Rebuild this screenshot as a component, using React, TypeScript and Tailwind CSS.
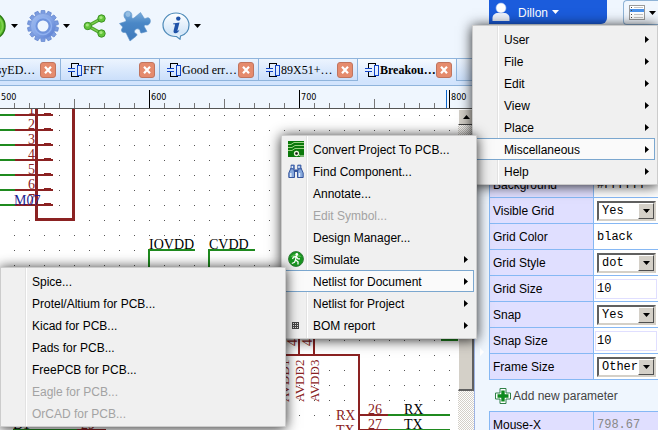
import React from "react";

const TABS = [
  { title: "EasyED…", active: false },
  { title: "FFT", active: false },
  { title: "Good err…", active: false },
  { title: "89X51+…", active: false },
  { title: "Breakou…", active: true },
];

type Item = {
  label: string;
  sub?: boolean;
  active?: boolean;
  disabled?: boolean;
  icon?: React.ReactNode;
};

function Caret({ className = "" }: { className?: string }) {
  return (
    <svg className={"h-1 w-[7px] shrink-0 " + className} viewBox="0 0 7 4" aria-hidden="true">
      <path d="M0 0H7L3.5 4Z" fill="currentColor" />
    </svg>
  );
}

function GearIcon() {
  const teeth = Array.from({ length: 14 }, (_, i) => (i * 360) / 14);
  return (
    <svg className="size-8" viewBox="-16 -16 32 32" aria-hidden="true">
      <defs>
        <linearGradient id="gear" x1="0" y1="0" x2="1" y2="1">
          <stop offset="0" stopColor="#a3bef0" />
          <stop offset="0.5" stopColor="#86a6e6" />
          <stop offset="1" stopColor="#5479cf" />
        </linearGradient>
      </defs>
      {teeth.map((a) => (
        <path key={a} d="M-2.400 -11L-1.800 -15.500H1.800L2.400 -11Z" fill="#7b9ce0" stroke="#6184cd" strokeWidth="0.700" transform={`rotate(${a})`} />
      ))}
      <circle r="12.500" fill="url(#gear)" stroke="#7294da" strokeWidth="0.600" />
      <circle r="8.500" fill="none" stroke="#8fb0ef" strokeWidth="1.500" />
      <circle r="6.500" fill="none" stroke="#6f93dc" strokeWidth="2" />
      <circle r="5.500" fill="#eff6fe" />
    </svg>
  );
}

function ShareIcon() {
  return (
    <svg className="h-6 w-6" viewBox="0 0 24 24" aria-hidden="true">
      <path d="M18.500 4.500L5 12L18.500 19.500" fill="none" stroke="#4da32f" strokeWidth="3.400" />
      <path d="M18.500 4.500L5 12L18.500 19.500" fill="none" stroke="#7ed14f" strokeWidth="1.400" />
      {[[18.5, 4.5], [4.8, 12], [18.5, 19.5]].map(([x, y]) => (
        <g key={`${x}${y}`}>
          <circle cx={x} cy={y} r="3.700" fill="#63c53a" stroke="#3f9427" />
          <circle cx={x - 0.5} cy={y - 1} r="1.600" fill="#a6e77e" />
        </g>
      ))}
    </svg>
  );
}

function PuzzleIcon() {
  return (
    <svg className="size-8" viewBox="0 0 32 32" aria-hidden="true">
      <defs>
        <linearGradient id="puzzle" x1="0" y1="0" x2="0" y2="1">
          <stop offset="0" stopColor="#7fb0dc" />
          <stop offset="0.4" stopColor="#4a87c6" />
          <stop offset="1" stopColor="#3f7abc" />
        </linearGradient>
      </defs>
      <path
        d="M0.500 13.500L6.500 11.500C7.500 10.500 7 9.500 5.800 8C4 5.500 5.200 1.500 8.500 1.200C12 1 13.300 4 12.800 6.500C12.600 8.200 13.500 8.800 15 8L21.500 2.500L25 8C26 9.300 27 8 28.500 7.700C30.500 7.500 31.800 9.500 31.300 12C30.800 14.500 28.800 15.500 26.800 15C25.300 14.700 24.800 15.800 25.500 17L28 21.500L22.500 23C21.300 23 21.300 21.800 21 20.500C20.300 18.500 17.500 18.200 16 20C14.800 21.500 15.500 23 17 23.500C18.300 24.200 18.300 25.300 17 26.300L11 31L7.800 24.500C7.200 22.800 6.300 22.300 4.800 22.500C2.500 22.500 1.800 19.800 3 18.500C4.200 17.500 3.300 16.500 2.500 15.800Z"
        fill="url(#puzzle)"
        stroke="#5e93c9"
        strokeWidth="0.600"
      />
      <circle cx="9" cy="4.500" r="2.400" fill="#a5c9e8" opacity="0.700" />
    </svg>
  );
}

function InfoIcon() {
  return (
    <svg className="size-7" viewBox="0 0 28 28" aria-hidden="true">
      <defs>
        <linearGradient id="info" x1="0" y1="0" x2="0" y2="1">
          <stop offset="0" stopColor="#ffffff" />
          <stop offset="0.750" stopColor="#d3e6f8" />
          <stop offset="1" stopColor="#f4faff" />
        </linearGradient>
      </defs>
      <path
        d="M14 1C21.500 1 27 6.500 27 13C27 18.500 23.500 22.500 18.500 24L18 27.200L14.500 24.500C6.500 24.800 1 19.800 1 13C1 6.500 6.500 1 14 1Z"
        fill="url(#info)"
        stroke="#4d8ab8"
        strokeWidth="1.200"
      />
      <circle cx="16.300" cy="6.600" r="2.200" fill="#1f52a8" />
      <path d="M11 11.500L17.500 10.500L15.500 18.200C15.300 19.300 16 19.200 17.500 17.500C17 20 15 21.300 13.300 21.200C11.500 21 11.300 19.700 11.700 18.200L13 13C13.200 12.200 12.500 12 11 12.200Z" fill="#1f52a8" />
    </svg>
  );
}

function SchematicIcon() {
  return (
    <svg className="h-[14px] w-[15px] shrink-0" viewBox="0 0 15 14" fill="none" shapeRendering="crispEdges" aria-hidden="true">
      <path d="M3.500 5V0.500H10.500V2M3.500 9V13.500H10.500V12" stroke="#000" />
      <path d="M0 5.500H7M0 8.500H7" stroke="#1043c8" />
      <rect x="9.500" y="2.500" width="4" height="10" stroke="#1043c8" />
    </svg>
  );
}

function CloseIcon() {
  return (
    <svg className="size-4 block" viewBox="0 0 16 16" aria-hidden="true">
      <rect x="0.500" y="0.500" width="15" height="15" rx="2.500" fill="#e58b6d" stroke="#c0745e" />
      <path d="M5 4.800L11 11.200M11 4.800L5 11.200" stroke="#fff" strokeWidth="2.200" />
    </svg>
  );
}

function Header() {
  return (
    <header className="flex h-[58px] shrink-0 justify-between">
      <nav className="flex h-[52px] items-center" aria-label="Toolbar">
        <button aria-label="Run" className="-ml-[22px] mr-1">
          <svg className="size-7 block" viewBox="0 0 28 28" aria-hidden="true">
            <circle cx="14" cy="14" r="13" fill="#5fc02c" stroke="#2d7d17" strokeWidth="1.500" />
            <circle cx="14" cy="14" r="10.500" fill="none" stroke="#7fd152" strokeWidth="1.500" />
          </svg>
        </button>
        <button aria-label="Run options" className="ml-px"><Caret /></button>
        <button aria-label="Settings" className="ml-[9px]"><GearIcon /></button>
        <button aria-label="Settings options" className="ml-1"><Caret /></button>
        <button aria-label="Share" className="ml-[13px]"><ShareIcon /></button>
        <button aria-label="Extensions" className="ml-3"><PuzzleIcon /></button>
        <button aria-label="About" className="ml-[11px]"><InfoIcon /></button>
        <button aria-label="About options" className="ml-1"><Caret /></button>
      </nav>
      <div className="flex items-start">
        <button className="flex h-6 w-[118px] items-center rounded-br-md bg-[#1b5cdc] pl-[3px] text-white">
          <svg className="h-[22px] w-[18px]" viewBox="0 0 18 22" aria-hidden="true">
            <path d="M0.500 20V17C0.500 14 3 12 6 12H12C15 12 17.500 14 17.500 17V20Z" fill="#eef3fc" />
            <circle cx="9" cy="7" r="5" fill="#fff" stroke="#9dbbf0" strokeWidth="0.600" />
          </svg>
          <span className="ml-2 mr-1 pt-px">Dillon</span>
          <Caret />
        </button>
        <button aria-label="Layout" className="ml-4 flex h-[25px] w-[35px] items-center rounded-l border border-r-0 border-[#8fb3d6] bg-[#f1f7fe] pl-[5px]">
          <svg className="h-[15px] w-4 shrink-0" viewBox="0 0 16 15" aria-hidden="true">
            <rect x="0.500" y="0.500" width="15" height="14" fill="#fff" stroke="#9a9a9a" />
            <rect x="1" y="4" width="14" height="3" fill="#4b92ea" />
            <path d="M5 2.500H14M5 9.500H14M5 12.500H14" stroke="#c5c5c5" />
            <path d="M2 2.500H3M2 5.500H3M2 9.500H3M2 12.500H3" stroke="#444" />
          </svg>
          <Caret className="ml-1" />
        </button>
      </div>
    </header>
  );
}

function TabStrip() {
  return (
    <div className="flex h-7 shrink-0 flex-col overflow-hidden">
      <div className="-ml-[39px] flex h-[23px]" role="tablist">
        {TABS.map((t) => (
          <div
            key={t.title}
            className={
              "flex w-[99px] shrink-0 items-center border-l border-t border-[#8fb4dc] bg-linear-to-b pl-[7px] pr-1 " +
              (t.active ? "from-[#f7fbff] to-[#d2e4fd]" : "border-b from-[#ecf4fe] to-[#cbdffa]")
            }
          >
            <button role="tab" aria-selected={t.active} className="flex flex-1 items-center">
              <SchematicIcon />
              <span className={"font-['Liberation_Serif',serif] text-xs whitespace-nowrap " + (t.active ? "font-bold" : "")}>{t.title}</span>
            </button>
            <button aria-label={"Close " + t.title} className="-ml-2"><CloseIcon /></button>
          </div>
        ))}
        <div className="flex-1 border border-r-0 border-[#8fb4dc] bg-linear-to-b from-[#ecf4fe] to-[#cbdffa]" />
      </div>
      <div className="h-[5px] border-b border-[#8fb4dc] bg-[#d2e4fd]" />
    </div>
  );
}

function Ruler() {
  const ticks = Array.from({ length: 31 }, (_, i) => i);
  return (
    <svg className="block h-[23px] w-full shrink-0 border-b border-[#555]" shapeRendering="crispEdges" aria-hidden="true">
      {ticks.map((i) => {
        const x = i * 15 - 1;
        const major = i % 10 === 0;
        return <rect key={i} x={x} y={major ? 4 : i % 5 === 0 ? 13 : 17} width="1" height="22" fill={major ? "#000" : "#777"} />;
      })}
      <rect x="446" y="4" width="1" height="18" fill="#0a64c8" />
      {[500, 600, 700, 800].map((n, i) => (
        <text key={n} x={i * 150 + 1} y="14" fontSize="9" className="font-['DejaVu_Sans_Condensed','DejaVu_Sans',sans-serif]" fill="#000">{n}</text>
      ))}
    </svg>
  );
}

function Schematic() {
  return (
    <svg className="block min-w-0 flex-1 bg-white font-['Liberation_Serif',serif]" fontSize="14" role="img" aria-label="Schematic">
      <defs>
        <pattern id="dots" width="15" height="15" patternUnits="userSpaceOnUse" x="14" y="115">
          <rect width="1" height="1" fill="#555" />
        </pattern>
      </defs>
      <g transform="translate(0 -109)">
        <rect x="0" y="109" width="100%" height="100%" fill="url(#dots)" />
        <g shapeRendering="crispEdges" fill="none" strokeWidth="2" stroke="#1f8a1f">
          {[0, 1, 2, 3, 4, 5, 6].map((i) => (
            <g key={i}>
              <path d={`M0 ${115 + i * 15}H15`} />
              <path d={`M15 ${115 + i * 15}H53M44 ${114 + i * 15}H51`} stroke="#8b2222" />
            </g>
          ))}
          <path d="M36.500 109V219.500H73.500V109" stroke="#8b2222" strokeWidth="3" />
          <path d="M195 250H149V280M255 250H209V280M441 340H458M388 415H450M388 430H450M13 430H77" />
          <path d="M299 330V355M314 330V355M281 355H359V440M359 415H388M359 430H388M77 430H105V440" stroke="#8b2222" />
        </g>
        <g fill="#8b2222">
          {[1, 2, 3, 4, 5, 6, 7].map((n) => (
            <text key={n} x="35" y={99 + n * 15} textAnchor="end">{n}</text>
          ))}
          <text x="336" y="420">RX</text>
          <text x="336" y="435">TX</text>
          <text x="368" y="414">26</text>
          <text x="368" y="429">27</text>
          <text x="81" y="429">29</text>
          {[1, 2, 3].map((n) => (
            <text key={n} transform={`translate(${274 + n * 15} 402) rotate(-90)`} fontSize="13">{"AVDD" + n}</text>
          ))}
          <text transform="translate(297 346) rotate(-90)">4</text>
          <text transform="translate(312 346) rotate(-90)">4</text>
        </g>
        <text x="14" y="205" fill="#1c1c90">M07</text>
        <text x="149" y="249">IOVDD</text>
        <text x="209" y="249">CVDD</text>
        <text x="404" y="414">RX</text>
        <text x="404" y="429">TX</text>
        <text x="13" y="429">D1</text>
      </g>
    </svg>
  );
}

function Scrollbar() {
  return (
    <div className="flex w-4 shrink-0 flex-col bg-[repeating-conic-gradient(#d4d0c8_0_25%,#fff_0_50%)] bg-size-[2px_2px]">
      <button aria-label="Scroll up" className="flex h-4 items-center justify-center border border-[#404040] border-t-white border-l-white bg-[#d4d0c8]">
        <Caret className="rotate-180" />
      </button>
      <div className="mt-[35px] h-[231px] border-r-2 border-b-2 border-l border-[#606060] border-l-white bg-[#d4d0c8]" />
    </div>
  );
}

function Select({ id, value, options }: { id: string; value: string; options: string[] }) {
  return (
    <div className="relative ml-[2px] h-5 w-[59px] border-2 border-[#d4d0c8] border-t-[#606060] border-l-[#606060] bg-white">
      <select id={id} defaultValue={value} className="block h-4 w-full appearance-none bg-transparent pl-[3px] leading-4 outline-none">
        {options.map((o) => <option key={o}>{o}</option>)}
      </select>
      <span className="pointer-events-none absolute top-0 right-0 flex h-4 w-4 items-center justify-center border border-[#505050] border-t-white border-l-white bg-[#d4d0c8]">
        <Caret />
      </span>
    </div>
  );
}

const PARAMS: { label: string; value: string; kind: "plain" | "box" | "select"; options?: string[] }[] = [
  { label: "Background", value: "#FFFFFF", kind: "plain" },
  { label: "Visible Grid", value: "Yes", kind: "select", options: ["Yes", "No"] },
  { label: "Grid Color", value: "black", kind: "plain" },
  { label: "Grid Style", value: "dot", kind: "select", options: ["dot", "line"] },
  { label: "Grid Size", value: "10", kind: "box" },
  { label: "Snap", value: "Yes", kind: "select", options: ["Yes", "No"] },
  { label: "Snap Size", value: "10", kind: "box" },
  { label: "Frame Size", value: "Other", kind: "select", options: ["Other", "A4"] },
];

function Panel() {
  const line = "border-[#86b8f4]";
  return (
    <aside className="flex w-[184px] shrink-0 border-l border-[#9db4e4]">
      <div className="flex w-[14px] shrink-0 items-center justify-center pt-[216px]">
        <svg className="h-2 w-1" viewBox="0 0 4 8" aria-hidden="true"><path d="M0 0L4 4L0 8Z" fill="#fff" /></svg>
      </div>
      <div className="min-w-0 flex-1 overflow-hidden pt-[113px]">
        <table className={"w-full table-fixed border-collapse border-y border-l " + line}>
          <tbody>
            {PARAMS.map((p) => {
              const id = p.label.toLowerCase().replace(" ", "-");
              return (
                <tr key={p.label} className={"h-[26px] border-b " + line}>
                  <th scope="row" className={"w-[104px] border-r bg-[#e0dfff] p-0 pl-[3px] text-left font-normal " + line}>
                    <label htmlFor={id}>{p.label}</label>
                  </th>
                  <td className="bg-white p-0 pl-px font-['Liberation_Mono',monospace]">
                    {p.kind === "select" ? (
                      <Select id={id} value={p.value} options={p.options ?? []} />
                    ) : (
                      <input
                        id={id}
                        defaultValue={p.value}
                        className={"block h-5 w-[62px] border px-px pt-px outline-none " + (p.kind === "box" ? "border-[#e0dfff]" : "border-transparent")}
                      />
                    )}
                  </td>
                </tr>
              );
            })}
          </tbody>
        </table>
        <button className="flex h-[31px] items-center pl-[6px] whitespace-nowrap text-[#444]">
          <svg className="size-4" viewBox="0 0 16 16" aria-hidden="true">
            <path d="M5 0.500H11V5H15.500V11H11V15.500H5V11H0.500V5H5Z" fill="#fff" stroke="#2f7f48" />
            <path d="M8 2.500V13.500M2.500 8H13.500" stroke="#0c8a1c" strokeWidth="3.400" />
          </svg>
          <span className="ml-[2px]">Add new parameter</span>
        </button>
        <table className={"w-full table-fixed border-collapse border-y border-l " + line}>
          <tbody>
            <tr className="h-[26px]">
              <th scope="row" className={"w-[104px] border-r bg-[#e0dfff] p-0 pl-[3px] text-left font-normal " + line}>Mouse-X</th>
              <td className="bg-[#e0dfff] p-0 pl-[3px] font-['Liberation_Mono',monospace] text-[#888]">798.67</td>
            </tr>
          </tbody>
        </table>
      </div>
    </aside>
  );
}

function PcbIcon() {
  return (
    <svg className="size-4" viewBox="0 0 16 16" aria-hidden="true">
      <rect width="16" height="16" fill="#0b780b" />
      <path d="M0 3.500H3L6 1.500H16M0 6.500H4L7 4.500H16M0 9.500H4L7 7.500H16" fill="none" stroke="#a9dc8c" strokeWidth="0.900" />
      <circle cx="8.500" cy="12.500" r="2" fill="#111" stroke="#e8f6d8" strokeWidth="1.300" />
      <path d="M10.500 13.500L12.500 15H16" fill="none" stroke="#e8f6d8" />
    </svg>
  );
}

function BinocularsIcon() {
  return (
    <svg className="size-4" viewBox="0 0 16 16" aria-hidden="true">
      <path d="M3 5H5.500L6.500 9V14.500H0.800V10ZM10.500 5H13L15.200 10V14.500H9.500V9Z" fill="#86a8dc" stroke="#35559c" />
      <path d="M3 2H6.300V6H3ZM9.700 2H13V6H9.700Z" fill="#5b80c2" stroke="#35559c" strokeWidth="0.700" />
      <path d="M6 6.500H10V9H6Z" fill="#35559c" />
      <path d="M2.800 10V14M11.500 10V14M4.300 3V5M11 3V5" stroke="#e4eefb" strokeWidth="1.400" />
    </svg>
  );
}

function RunIcon() {
  return (
    <svg className="size-4" viewBox="0 0 16 16" aria-hidden="true">
      <circle cx="8" cy="8" r="7.400" fill="#17951f" stroke="#2f7a35" />
      <path d="M2.500 6A6 5 0 0 1 13.500 6Z" fill="#6fce62" opacity="0.600" />
      <circle cx="8.800" cy="3.500" r="1.400" fill="#fff" />
      <path d="M8.300 5.500L7.500 9L10 10.800V13.500M7.500 9L6.500 11.300L3.800 12.500M4.500 8L5.500 6L8.300 5.500L10 7.800H12" fill="none" stroke="#fff" strokeWidth="1.300" />
    </svg>
  );
}

function GridIcon() {
  return (
    <svg className="h-[7px] w-[7px]" viewBox="0 0 7 7" shapeRendering="crispEdges" aria-hidden="true">
      <rect width="7" height="7" fill="#444" />
      <path d="M1 1.500H6M1 3.500H6M1 5.500H6" stroke="#e0e0e0" strokeDasharray="1 1" />
    </svg>
  );
}

function Menu({ items, label, className }: { items: Item[]; label: string; className: string }) {
  return (
    <div
      role="menu"
      aria-label={label}
      className={"absolute border border-[#ccc] bg-[#f0f0f0] bg-[linear-gradient(to_right,transparent_24px,#e2e2e2_24px,#e2e2e2_25px,#fff_25px,#fff_26px,transparent_26px)] p-[2px] shadow-[0_1px_12px_rgba(0,0,0,0.85)] " + className}
    >
      {items.map((it) => (
        <button
          key={it.label}
          role="menuitem"
          disabled={it.disabled}
          className={
            "flex h-[22px] w-full items-center border pr-[5px] whitespace-nowrap " +
            (it.active ? "border-[#7ba7cf] bg-[#fafafa] " : "border-transparent ") +
            (it.disabled ? "text-[#a3a3a3]" : "text-black")
          }
        >
          <span className="mr-[7px] flex w-[21px] shrink-0 items-center justify-center">{it.icon}</span>
          <span className="flex-1 pt-[2px] text-left">{it.label}</span>
          {it.sub && (
            <svg className="h-[7px] w-1" viewBox="0 0 4 7" aria-hidden="true"><path d="M0 0L4 3.500L0 7Z" /></svg>
          )}
        </button>
      ))}
    </div>
  );
}

const MAIN_MENU: Item[] = [
  { label: "User", sub: true },
  { label: "File", sub: true },
  { label: "Edit", sub: true },
  { label: "View", sub: true },
  { label: "Place", sub: true },
  { label: "Miscellaneous", sub: true, active: true },
  { label: "Help", sub: true },
];

const MISC_MENU: Item[] = [
  { label: "Convert Project To PCB...", icon: <PcbIcon /> },
  { label: "Find Component...", icon: <BinocularsIcon /> },
  { label: "Annotate..." },
  { label: "Edit Symbol...", disabled: true },
  { label: "Design Manager..." },
  { label: "Simulate", sub: true, icon: <RunIcon /> },
  { label: "Netlist for Document", sub: true, active: true },
  { label: "Netlist for Project", sub: true },
  { label: "BOM report", sub: true, icon: <GridIcon /> },
];

const NETLIST_MENU: Item[] = [
  { label: "Spice..." },
  { label: "Protel/Altium for PCB..." },
  { label: "Kicad for PCB..." },
  { label: "Pads for PCB..." },
  { label: "FreePCB for PCB..." },
  { label: "Eagle for PCB...", disabled: true },
  { label: "OrCAD for PCB...", disabled: true },
];

export default function App() {
  return (
    <div className="relative flex h-screen flex-col overflow-hidden bg-[#eff6fe] font-['Liberation_Sans',Arial,sans-serif] text-xs text-black">
      <Header />
      <div className="flex min-h-0 flex-1">
        <main className="flex min-w-0 flex-1 flex-col">
          <TabStrip />
          <Ruler />
          <div className="flex min-h-0 flex-1">
            <Schematic />
            <Scrollbar />
          </div>
        </main>
        <Panel />
      </div>
      <Menu label="Main" items={MAIN_MENU} className="top-[25px] right-0 w-[186px]" />
      <Menu label="Miscellaneous" items={MISC_MENU} className="top-[135px] right-[181px] w-[196px]" />
      <Menu label="Netlist for Document" items={NETLIST_MENU} className="top-[267px] right-[372px] w-[286px]" />
    </div>
  );
}
